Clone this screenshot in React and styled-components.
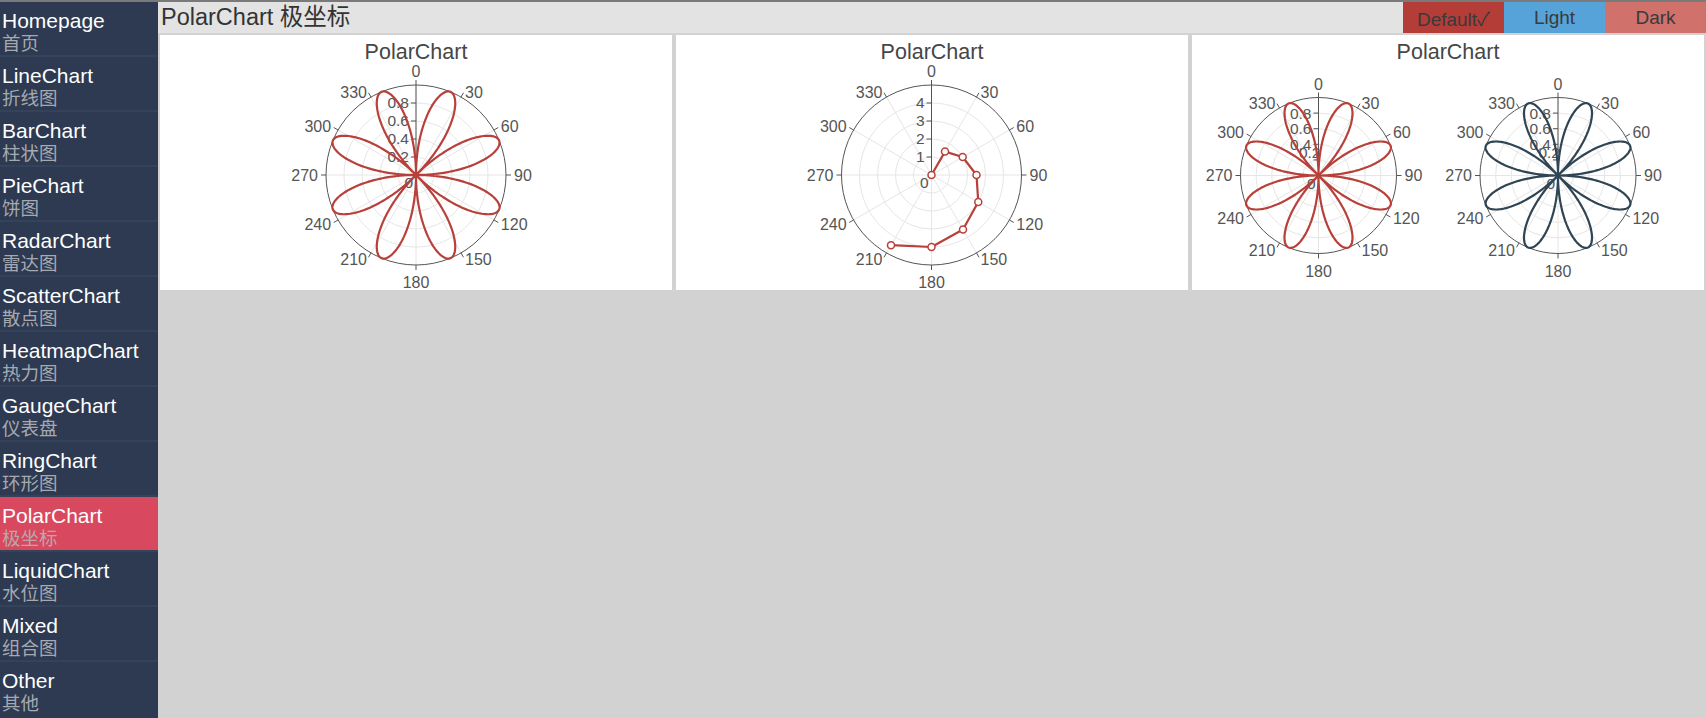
import React from "react";
import styled, { createGlobalStyle } from "styled-components";

const GlobalStyle = createGlobalStyle`
  html, body { margin: 0; padding: 0; overflow: hidden; }
  body { font-family: "Liberation Sans", "Noto Sans CJK SC", sans-serif; }
`;

const Page = styled.div`
  width: 1706px;
  height: 718px;
  display: flex;
  flex-direction: column;
  background: #d2d2d2;
`;

const TopStrip = styled.div`
  height: 2px;
  background: #7a7a7a;
  flex: none;
`;

const Body = styled.div`
  flex: 1;
  display: flex;
  min-height: 0;
`;

const Sidebar = styled.nav`
  width: 158px;
  flex: none;
  background: #2d3a51;
  display: flex;
  flex-direction: column;
`;

const NavItem = styled.div`
  height: 55px;
  box-sizing: border-box;
  padding: 7px 0 0 2px;
  border-bottom: 2px solid #35435a;
  background: ${(p) => (p.$active ? "#d8485e" : "transparent")};
  &:last-child { border-bottom: none; }
`;

const NavTitle = styled.div`
  font-size: 21px;
  line-height: 23px;
  color: #ffffff;
  white-space: nowrap;
`;

const NavSub = styled.div`
  font-size: 18.5px;
  line-height: 20px;
  color: ${(p) => (p.$active ? "#b9a7ac" : "#a6a9b0")};
  font-family: "Noto Sans CJK SC", sans-serif;
`;

const Main = styled.main`
  flex: 1;
  display: flex;
  flex-direction: column;
  min-width: 0;
`;

const Header = styled.header`
  height: 31px;
  flex: none;
  background: #e3e3e3;
  display: flex;
  align-items: stretch;
  justify-content: space-between;
`;

const PageTitle = styled.h1`
  margin: 0;
  padding-left: 3px;
  font-weight: normal;
  font-size: 23.5px;
  line-height: 31px;
  color: #333333;
`;

const ThemeBar = styled.div`
  display: flex;
`;

const ThemeButton = styled.button`
  width: 101px;
  border: none;
  margin: 0;
  padding: 0;
  font-family: inherit;
  font-size: 19px;
  color: #3a3a3a;
  background: ${(p) => p.$bg};
`;

const Content = styled.div`
  padding: 2px;
  display: grid;
  grid-template-columns: repeat(3, 1fr);
  gap: 4px;
  align-content: start;
`;

const Card = styled.section`
  background: #ffffff;
  height: 255px;
  display: flex;
  flex-direction: column;
  align-items: center;
`;

const ChartTitle = styled.div`
  font-size: 21.5px;
  line-height: 24px;
  padding-top: 5px;
  height: 25px;
  color: #464646;
`;

const ChartSvg = styled.svg`
  display: block;
  width: 512px;
  height: 225px;
  overflow: visible;
`;

const navItems = [
  ["Homepage", "首页"],
  ["LineChart", "折线图"],
  ["BarChart", "柱状图"],
  ["PieChart", "饼图"],
  ["RadarChart", "雷达图"],
  ["ScatterChart", "散点图"],
  ["HeatmapChart", "热力图"],
  ["GaugeChart", "仪表盘"],
  ["RingChart", "环形图"],
  ["PolarChart", "极坐标"],
  ["LiquidChart", "水位图"],
  ["Mixed", "组合图"],
  ["Other", "其他"],
];

const RED = "#b8403a";
const NAVY = "#2f4554";
const rad = (d) => (d * Math.PI) / 180;

function rosePath(cx, cy, R) {
  const pts = [];
  for (let t = 0; t <= 360; t += 0.5) {
    const r = Math.abs(Math.sin(rad(4 * t))) * R;
    pts.push(
      `${(cx + r * Math.sin(rad(t))).toFixed(2)},${(cy - r * Math.cos(rad(t))).toFixed(2)}`
    );
  }
  return "M" + pts.join("L") + "Z";
}

function PolarPlot({ cx, cy, R, max, ticks, labelShift = {}, children }) {
  const angles = [];
  for (let a = 0; a < 360; a += 30) angles.push(a);
  return (
    <g fontFamily='"Liberation Sans", sans-serif'>
      {ticks.map((t) => (
        <circle key={t} cx={cx} cy={cy} r={(t / max) * R} fill="none" stroke="#e6e6e6" strokeWidth="1" />
      ))}
      {angles.map((a) => (
        <line
          key={"s" + a}
          x1={cx}
          y1={cy}
          x2={cx + R * Math.sin(rad(a))}
          y2={cy - R * Math.cos(rad(a))}
          stroke="#e6e6e6"
          strokeWidth="1"
        />
      ))}
      <circle cx={cx} cy={cy} r={R} fill="none" stroke="#555" strokeWidth="1" />
      {angles.map((a) => {
        const s = Math.sin(rad(a));
        const c = Math.cos(rad(a));
        const lx = cx + (R + 8) * s;
        const ly = cy - (R + 8) * c;
        const anchor = Math.abs(s) < 0.01 ? "middle" : s > 0 ? "start" : "end";
        let dy = "0.35em";
        if (a === 0) dy = "0em";
        if (a === 180) dy = "0.95em";
        if (a === 30 || a === 330) dy = "0.5em";
        return (
          <g key={"a" + a}>
            <line
              x1={cx + R * s}
              y1={cy - R * c}
              x2={cx + (R + 5) * s}
              y2={cy - (R + 5) * c}
              stroke="#555"
              strokeWidth="1"
            />
            <text x={lx} y={ly} dy={dy} textAnchor={anchor} fontSize="16" fill="#555">
              {a}
            </text>
          </g>
        );
      })}
      <line x1={cx} y1={cy} x2={cx} y2={cy - R} stroke="#555" strokeWidth="1" />
      {ticks.map((t) => {
        const y = cy - (t / max) * R;
        const sh = labelShift[t] || [0, 0];
        return (
          <g key={"r" + t}>
            <line x1={cx - 5} y1={y} x2={cx} y2={y} stroke="#555" strokeWidth="1" />
            <text x={cx - 7 + sh[0]} y={y + sh[1]} dy="0.35em" textAnchor="end" fontSize="15.5" fill="#555">
              {t}
            </text>
          </g>
        );
      })}
      <text x={cx - 3} y={cy + 8} dy="0.35em" textAnchor="end" fontSize="15.5" fill="#555">
        0
      </text>
      {children}
    </g>
  );
}

const spiral = [
  [0, 0],
  [30, 1.5],
  [60, 2],
  [90, 2.5],
  [120, 3],
  [150, 3.5],
  [180, 4],
  [210, 4.5],
];

function SpiralSeries({ cx, cy, R, max }) {
  const pts = spiral.map(([a, v]) => [
    cx + (v / max) * R * Math.sin(rad(a)),
    cy - (v / max) * R * Math.cos(rad(a)),
  ]);
  return (
    <g>
      <polyline
        points={pts.map((p) => p.join(",")).join(" ")}
        fill="none"
        stroke={RED}
        strokeWidth="2.2"
        strokeLinejoin="round"
      />
      {pts.map((p, i) => (
        <circle key={i} cx={p[0]} cy={p[1]} r="3.5" fill="#fff" stroke={RED} strokeWidth="1.5" />
      ))}
    </g>
  );
}

const roseTicks = [0.2, 0.4, 0.6, 0.8];

export default function App() {
  return (
    <Page>
      <GlobalStyle />
      <TopStrip />
      <Body>
        <Sidebar>
          {navItems.map(([en, zh]) => {
            const active = en === "PolarChart";
            return (
              <NavItem key={en} $active={active}>
                <NavTitle>{en}</NavTitle>
                <NavSub $active={active}>{zh}</NavSub>
              </NavItem>
            );
          })}
        </Sidebar>
        <Main>
          <Header>
            <PageTitle>PolarChart 极坐标</PageTitle>
            <ThemeBar>
              <ThemeButton $bg="#b43d38">Default✓</ThemeButton>
              <ThemeButton $bg="#56a3d9">Light</ThemeButton>
              <ThemeButton $bg="#d0716b">Dark</ThemeButton>
            </ThemeBar>
          </Header>
          <Content>
            <Card>
              <ChartTitle>PolarChart</ChartTitle>
              <ChartSvg viewBox="0 0 512 225">
                <PolarPlot cx={256} cy={110} R={90} max={1} ticks={roseTicks}>
                  <path d={rosePath(256, 110, 90)} fill="none" stroke={RED} strokeWidth="2.2" />
                </PolarPlot>
              </ChartSvg>
            </Card>
            <Card>
              <ChartTitle>PolarChart</ChartTitle>
              <ChartSvg viewBox="0 0 512 225">
                <PolarPlot cx={255.5} cy={110} R={90} max={5} ticks={[1, 2, 3, 4]}>
                  <SpiralSeries cx={255.5} cy={110} R={90} max={5} />
                </PolarPlot>
              </ChartSvg>
            </Card>
            <Card>
              <ChartTitle>PolarChart</ChartTitle>
              <ChartSvg viewBox="0 0 512 225">
                <PolarPlot cx={126.5} cy={110.5} R={78} max={1} ticks={roseTicks} labelShift={{ 0.2: [9, -7] }}>
                  <path d={rosePath(126.5, 110.5, 78)} fill="none" stroke={RED} strokeWidth="2.2" />
                </PolarPlot>
                <PolarPlot cx={366} cy={110.5} R={78} max={1} ticks={roseTicks} labelShift={{ 0.2: [9, -7] }}>
                  <path d={rosePath(366, 110.5, 78)} fill="none" stroke={NAVY} strokeWidth="2.2" />
                </PolarPlot>
              </ChartSvg>
            </Card>
          </Content>
        </Main>
      </Body>
    </Page>
  );
}
